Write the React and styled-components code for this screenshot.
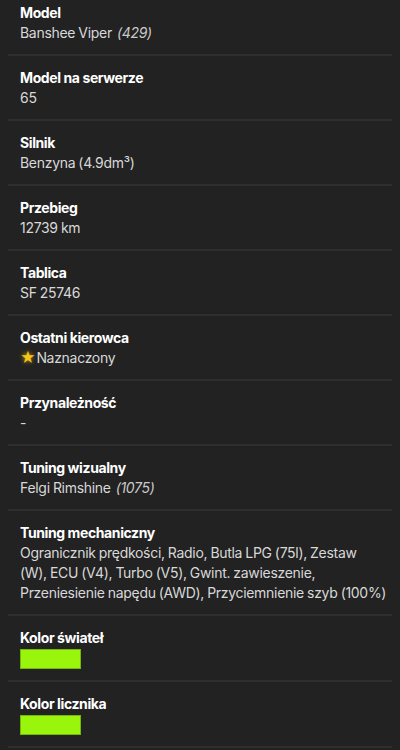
import React from 'react';
import styled, { createGlobalStyle } from 'styled-components';

const GlobalStyle = createGlobalStyle`
  html, body {
    margin: 0;
    padding: 0;
    background: #222222;
  }
  body {
    font-family: Inter, "Noto Sans", "Liberation Sans", sans-serif;
    -webkit-font-smoothing: antialiased;
  }
`;

const List = styled.div`
  width: 400px;
  height: 750px;
  overflow: hidden;
  background: #222222;
`;

const Row = styled.div`
  display: flex;
  flex-direction: column;
  margin: 0 8px;
  padding: 12px 0 11px 12px;
  border-bottom: 2px solid #2e2e2e;
  &:first-child {
    padding-top: 3px;
  }
`;

const Label = styled.div`
  font-size: 14px;
  line-height: 20px;
  font-weight: 700;
  letter-spacing: -0.4px;
  color: #ffffff;
`;

const Value = styled.div`
  font-size: 14px;
  line-height: 20px;
  font-weight: 400;
  letter-spacing: -0.3px;
  word-spacing: -0.5px;
  color: #d8d8d8;
`;

const Note = styled.i`
  color: #c9c9c9;
  margin-left: 5px;
`;

const Star = styled.span`
  color: #f5c518;
  font-size: 15px;
  margin-right: 1px;
  text-shadow: 0 0 4px rgba(245, 197, 24, 0.7);
`;

const Swatch = styled.div`
  width: 59px;
  height: 18px;
  margin-top: 1px;
  background: ${p => p.color};
  border: 1px solid #74b80a;
`;

const rows = [
  { label: 'Model', value: 'Banshee Viper', note: '(429)' },
  { label: 'Model na serwerze', value: '65' },
  { label: 'Silnik', value: 'Benzyna (4.9dm³)' },
  { label: 'Przebieg', value: '12739 km' },
  { label: 'Tablica', value: 'SF 25746' },
  { label: 'Ostatni kierowca', value: 'Naznaczony', star: true },
  { label: 'Przynależność', value: '-' },
  { label: 'Tuning wizualny', value: 'Felgi Rimshine', note: '(1075)' },
  {
    label: 'Tuning mechaniczny',
    value:
      'Ogranicznik prędkości, Radio, Butla LPG (75l), Zestaw (W),\u00a0ECU (V4), Turbo (V5), Gwint. zawieszenie, Przeniesienie napędu (AWD), Przyciemnienie szyb (100%)'
  },
  { label: 'Kolor świateł', color: '#9af50c' },
  { label: 'Kolor licznika', color: '#9af50c' }
];

export default function App() {
  return (
    <>
      <GlobalStyle />
      <List>
        {rows.map(row => (
          <Row key={row.label}>
            <Label>{row.label}</Label>
            {row.color ? (
              <Swatch color={row.color} />
            ) : (
              <Value>
                {row.star && <Star>★</Star>}
                {row.value}
                {row.note && <Note>{row.note}</Note>}
              </Value>
            )}
          </Row>
        ))}
      </List>
    </>
  );
}
